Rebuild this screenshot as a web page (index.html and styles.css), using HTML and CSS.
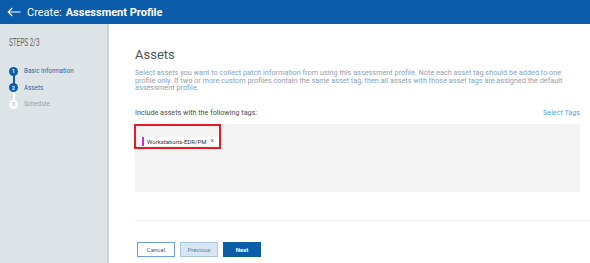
FILE: index.html
```html
<!DOCTYPE html>
<html>
<head>
<meta charset="utf-8">
<link rel="stylesheet" href="styles.css">
</head>
<body>
<header class="topbar">
  <svg class="back" width="14" height="10" viewBox="0 0 14 10"><path d="M13.5 5H1.2M5.2 1L1.2 5l4 4" fill="none" stroke="#fff" stroke-width="1.1"/></svg>
  <span class="title">Create:</span><span class="title-bold">Assessment Profile</span>
</header>
<div class="layout">
  <aside class="sidebar">
    <div class="steps-label"><span>STEPS 2/3</span></div>
    <ol class="steps">
      <li class="step done"><span class="dot">1</span><span class="step-name">Basic Information</span></li>
      <li class="step current"><span class="dot">2</span><span class="step-name">Assets</span></li>
      <li class="step todo"><span class="dot">3</span><span class="step-name">Schedule</span></li>
    </ol>
  </aside>
  <main class="main">
    <h1 class="heading">Assets</h1>
    <p class="desc">Select assets you want to collect patch information from using this assessment profile. Note each asset tag should be added to one profile only. If two or more custom profiles contain the same asset tag, then all assets with those asset tags are assigned the default assessment profile.</p>
    <div class="tags-row">
      <span class="tags-label">Include assets with the following tags:</span>
      <a class="select-tags">Select Tags</a>
    </div>
    <div class="tag-area">
      <div class="highlight">
        <span class="tag"><span class="tag-bar"></span><span class="tag-text">Workstations-EDR/PM</span><span class="tag-x">×</span></span>
      </div>
    </div>
    <hr class="sep">
    <div class="buttons">
      <button class="btn btn-cancel">Cancel</button>
      <button class="btn btn-prev">Previous</button>
      <button class="btn btn-next">Next</button>
    </div>
  </main>
</div>
</body>
</html>
```
FILE: styles.css
```css
* { box-sizing: border-box; }
html, body { margin: 0; padding: 0; }
body {
  width: 590px;
  height: 263px;
  overflow: hidden;
  font-family: Roboto, "Liberation Sans", sans-serif;
  background: #fff;
}
.topbar {
  height: 24px;
  background: #0b5ca9;
  display: flex;
  align-items: center;
  padding-left: 7px;
  color: #fff;
}
.back { margin-right: 6px; }
.title { font-size: 11px; margin-right: 4px; }
.title-bold { font-size: 11px; font-weight: 700; }
.layout {
  display: flex;
  height: 239px;
}
.sidebar {
  width: 109px;
  flex: none;
  background: #dde4e8;
  border-right: 2px solid #c9d3d9;
  padding: 13px 0 0 9px;
}
.steps-label {
  font-size: 10px;
  color: #5a6268;
  height: 12px;
  line-height: 12px;
}
.steps-label span {
  display: inline-block;
  transform: scaleX(0.64);
  transform-origin: left center;
}
.steps {
  list-style: none;
  margin: 14px 0 0 0;
  padding: 0;
}
.step {
  display: flex;
  align-items: center;
  height: 16.5px;
  position: relative;
}
.dot {
  width: 9px;
  height: 9px;
  border-radius: 50%;
  font-size: 5px;
  font-weight: 700;
  display: flex;
  align-items: center;
  justify-content: center;
  margin-right: 6px;
  position: relative;
  z-index: 1;
}
.done .dot, .current .dot { background: #0b5ca9; color: #fff; }
.todo .dot { background: #fff; color: #bbb; }
.step + .step::before {
  content: "";
  position: absolute;
  left: 3.5px;
  top: -8px;
  width: 2px;
  height: 16px;
  background: #0b5ca9;
}
.todo::before { background: #fff !important; }
.step-name { font-size: 6.3px; }
.done .step-name, .current .step-name { color: #2a68a6; }
.todo .step-name { color: #9aa3a8; }
.main {
  flex: 1;
  padding: 22px 0 0 26px;
}
.heading {
  margin: 0;
  font-size: 13px;
  font-weight: 400;
  color: #4f5458;
  line-height: 18px;
}
.desc {
  margin: 5px 10px 0 0;
  font-size: 7.3px;
  line-height: 7.6px;
  color: #8ba3b5;
}
.tags-row {
  display: flex;
  justify-content: space-between;
  align-items: center;
  margin: 16px 10px 0 0;
  font-size: 7.2px;
}
.tags-label { color: #4a4f53; }
.select-tags { color: #5ba3d6; }
.tag-area {
  margin: 7px 10px 0 0;
  height: 68px;
  background: #f3f3f3;
}
.highlight {
  display: inline-block;
  width: 87px;
  height: 25px;
  border: 2px solid #e21b24;
  margin-left: -1px;
  padding: 5px 0 0 5px;
  white-space: nowrap;
}
.tag {
  display: inline-flex;
  align-items: center;
  background: #fff;
  height: 9px;
  padding-right: 5px;
}
.tag-bar {
  width: 2px;
  height: 9px;
  background: #e020d8;
  margin: 0 3px 0 1px;
}
.tag-text { font-size: 6px; color: #333; }
.tag-x { font-size: 7px; color: #777; margin-left: 4px; }
.sep {
  margin: 28px 0 0 0;
  border: 0;
  border-top: 1px solid #eeeeee;
}
.buttons {
  display: flex;
  gap: 5px;
  margin: 21px 0 0 2px;
}
.btn {
  font-family: Roboto, "Liberation Sans", sans-serif;
  font-size: 6px;
  height: 15px;
  width: 38px;
  padding: 0;
  border-radius: 0;
  border: 1px solid #6d9fcc;
}
.btn-cancel { background: #fff; color: #2a68a6; }
.btn-prev { background: #d7e6f2; color: #5b7d9c; border-color: #a9c6df; }
.btn-next { background: #0b5ca9; color: #fff; border-color: #0b5ca9; font-weight: 700; }
```
